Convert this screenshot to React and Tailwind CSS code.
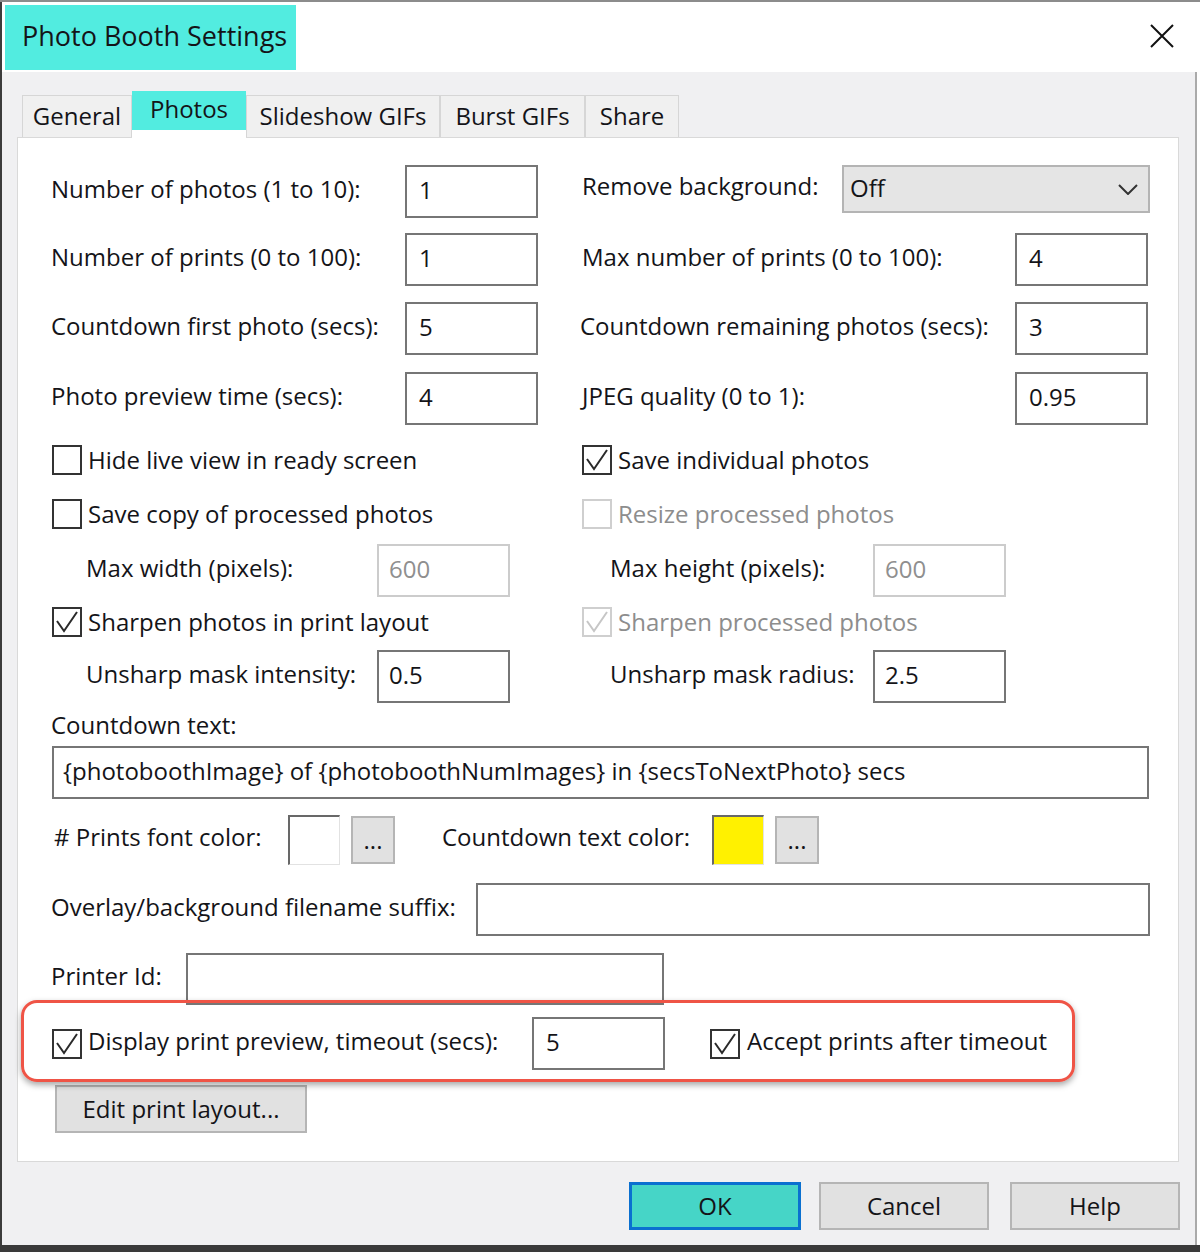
import React from 'react';

const CheckBox = ({ checked, disabled }) => (
  <div className={`w-[30px] h-[30px] shrink-0 bg-white border-2 ${disabled ? 'border-[#cfcfcf]' : 'border-[#333333]'}`}>
    {checked && (
      <svg viewBox="0 0 26 26" className="w-full h-full">
        <polyline points="3,12 10,22 23,3" fill="none" stroke={disabled ? '#c6c6c6' : '#2a2a2a'} strokeWidth="2" />
      </svg>
    )}
  </div>
);

const TextBox = ({ value, w, disabled, pad = 'pl-[12px]' }) => (
  <div className={`${w} h-full shrink-0 flex items-center ${pad} pb-[4px] bg-white border-2 ${disabled ? 'border-[#cccccc] text-[#8f8f8f]' : 'border-[#767676]'}`}>
    {value}
  </div>
);

const Button = ({ children, w, h = 'h-[48px]' }) => (
  <div className={`${w} ${h} shrink-0 flex items-center justify-center bg-[#e1e1e1] border-2 border-[#b5b5b5]`}>
    {children}
  </div>
);

const Swatch = ({ color }) => (
  <div className={`w-[52px] h-[50px] shrink-0 border-t-2 border-l-2 border-r border-b border-t-[#686868] border-l-[#686868] border-r-[#e2e2e2] border-b-[#e2e2e2] ${color}`} />
);

const Label = ({ w, className = '', children }) => (
  <span className={`${w} shrink-0 pb-[6px] ${className}`}>{children}</span>
);

const tabs = [
  { label: 'General', w: 'w-[110px]' },
  { label: 'Photos', w: 'w-[114px]', active: true },
  { label: 'Slideshow GIFs', w: 'w-[194px]' },
  { label: 'Burst GIFs', w: 'w-[145px]' },
  { label: 'Share', w: 'w-[94px]' },
];

export default function App() {
  return (
    <div className="w-[1200px] h-[1252px] bg-white font-['Open_Sans',sans-serif] text-[24px] text-[#141418] flex flex-col overflow-hidden">
      <div className="h-[2px] shrink-0 bg-[#8c8c8c]" />
      <div className="flex flex-1">
        <div className="w-[2px] bg-[#3c3c3c]" />
        <div className="w-[1195px] flex flex-col">
          {/* title bar */}
          <div className="h-[70px] shrink-0 flex items-start bg-white">
            <div className="mt-[3px] ml-[3px] w-[291px] h-[65px] bg-[#52ece0] flex items-center pl-[17px] pb-[2px] text-[27px]">
              Photo Booth Settings
            </div>
            <svg viewBox="0 0 24 24" className="ml-auto mt-[22px] mr-[23px] w-[24px] h-[24px]">
              <path d="M1 1 L23 23 M23 1 L1 23" stroke="#111" strokeWidth="2" fill="none" />
            </svg>
          </div>

          {/* body */}
          <div className="flex-1 bg-[#f0f0f2] border-r-2 border-[#aaaaaa] flex flex-col">
            <div className="mt-[19px] -mb-px ml-[20px] h-[47px] flex items-end relative z-10">
              {tabs.map((t) =>
                t.active ? (
                  <div key={t.label} className={`${t.w} h-[47px] flex flex-col`}>
                    <div className="h-[39px] bg-[#52ece0] flex items-center justify-center pb-[3px]">{t.label}</div>
                    <div className="h-[8px] bg-white" />
                  </div>
                ) : (
                  <div key={t.label} className={`${t.w} h-[42px] mb-px flex items-center justify-center pb-[2px] bg-[#f0f0f0] border-t border-l border-r border-[#d6d6d6]`}>
                    {t.label}
                  </div>
                )
              )}
            </div>

            {/* tab panel */}
            <div className="ml-[15px] w-[1162px] bg-white border border-[#d9d9d9] pl-[33px] pt-[27px] pb-[28px] flex flex-col">
              <div className="flex h-[53px]">
                <div className="w-[531px] flex items-center h-full">
                  <Label w="w-[354px]">Number of photos (1 to 10):</Label>
                  <TextBox value="1" w="w-[133px]" />
                </div>
                <div className="flex items-center h-[48px]">
                  <Label w="w-[260px]">Remove background:</Label>
                  <div className="w-[308px] h-full flex items-center justify-between pl-[6px] pr-[10px] pb-[3px] bg-[#e5e5e5] border-2 border-[#b4b4b4]">
                    <span>Off</span>
                    <svg viewBox="0 0 20 11" className="w-[20px] h-[11px] mt-[3px]">
                      <polyline points="1,1 10,10 19,1" fill="none" stroke="#333" strokeWidth="2" />
                    </svg>
                  </div>
                </div>
              </div>

              <div className="flex h-[53px] mt-[15px]">
                <div className="w-[531px] flex items-center h-full">
                  <Label w="w-[354px]">Number of prints (0 to 100):</Label>
                  <TextBox value="1" w="w-[133px]" />
                </div>
                <div className="flex items-center h-full">
                  <Label w="w-[433px]">Max number of prints (0 to 100):</Label>
                  <TextBox value="4" w="w-[133px]" />
                </div>
              </div>

              <div className="flex h-[53px] mt-[16px]">
                <div className="w-[531px] flex items-center h-full">
                  <Label w="w-[354px]">Countdown first photo (secs):</Label>
                  <TextBox value="5" w="w-[133px]" />
                </div>
                <div className="flex items-center h-full">
                  <Label w="w-[433px]" className="-ml-[2px] mr-[2px]">Countdown remaining photos (secs):</Label>
                  <TextBox value="3" w="w-[133px]" />
                </div>
              </div>

              <div className="flex h-[53px] mt-[17px]">
                <div className="w-[531px] flex items-center h-full">
                  <Label w="w-[354px]">Photo preview time (secs):</Label>
                  <TextBox value="4" w="w-[133px]" />
                </div>
                <div className="flex items-center h-full">
                  <Label w="w-[433px]">JPEG quality (0 to 1):</Label>
                  <TextBox value="0.95" w="w-[133px]" />
                </div>
              </div>

              <div className="flex h-[30px] mt-[20px]">
                <div className="w-[531px] flex items-center pl-[1px] gap-[6px]">
                  <CheckBox />
                  <span>Hide live view in ready screen</span>
                </div>
                <div className="flex items-center gap-[6px]">
                  <CheckBox checked />
                  <span>Save individual photos</span>
                </div>
              </div>

              <div className="flex h-[30px] mt-[24px]">
                <div className="w-[531px] flex items-center pl-[1px] gap-[6px]">
                  <CheckBox />
                  <span>Save copy of processed photos</span>
                </div>
                <div className="flex items-center gap-[6px] text-[#8d8d8d]">
                  <CheckBox disabled />
                  <span>Resize processed photos</span>
                </div>
              </div>

              <div className="flex h-[53px] mt-[15px]">
                <div className="w-[531px] flex items-center h-full pl-[35px]">
                  <Label w="w-[291px]">Max width (pixels):</Label>
                  <TextBox value="600" w="w-[133px]" disabled pad="pl-[10px]" />
                </div>
                <div className="flex items-center h-full pl-[28px]">
                  <Label w="w-[263px]">Max height (pixels):</Label>
                  <TextBox value="600" w="w-[133px]" disabled pad="pl-[10px]" />
                </div>
              </div>

              <div className="flex h-[30px] mt-[10px]">
                <div className="w-[531px] flex items-center pl-[1px] gap-[6px]">
                  <CheckBox checked />
                  <span>Sharpen photos in print layout</span>
                </div>
                <div className="flex items-center gap-[6px] text-[#8d8d8d]">
                  <CheckBox checked disabled />
                  <span>Sharpen processed photos</span>
                </div>
              </div>

              <div className="flex h-[53px] mt-[13px]">
                <div className="w-[531px] flex items-center h-full pl-[35px]">
                  <Label w="w-[291px]">Unsharp mask intensity:</Label>
                  <TextBox value="0.5" w="w-[133px]" pad="pl-[10px]" />
                </div>
                <div className="flex items-center h-full pl-[28px]">
                  <Label w="w-[263px]">Unsharp mask radius:</Label>
                  <TextBox value="2.5" w="w-[133px]" pad="pl-[10px]" />
                </div>
              </div>

              <div className="h-[30px] mt-[9px] flex items-center pb-[4px]">Countdown text:</div>

              <div className="h-[53px] mt-[4px] ml-[1px] flex">
                <TextBox value="{photoboothImage} of {photoboothNumImages} in {secsToNextPhoto} secs" w="w-[1097px]" pad="pl-[9px]" />
              </div>

              <div className="h-[50px] mt-[16px] flex items-center pl-[3px]">
                <Label w="w-[234px]">&#35; Prints font color:</Label>
                <Swatch color="bg-white" />
                <div className="ml-[11px]">
                  <Button w="w-[44px]">...</Button>
                </div>
                <Label w="w-[270px]" className="ml-[47px]">Countdown text color:</Label>
                <Swatch color="bg-[#fff100]" />
                <div className="ml-[11px]">
                  <Button w="w-[44px]">...</Button>
                </div>
              </div>

              <div className="h-[53px] mt-[18px] flex items-center">
                <Label w="w-[425px]">Overlay/background filename suffix:</Label>
                <TextBox value="" w="w-[674px]" />
              </div>

              <div className="h-[52px] mt-[17px] flex items-center">
                <Label w="w-[135px]">Printer Id:</Label>
                <TextBox value="" w="w-[478px]" />
              </div>

              <div className="relative h-[53px] mt-[12px] flex items-center pl-[1px]">
                <CheckBox checked />
                <Label w="w-[444px]" className="ml-[6px]">Display print preview, timeout (secs):</Label>
                <TextBox value="5" w="w-[133px]" />
                <div className="ml-[45px]">
                  <CheckBox checked />
                </div>
                <Label w="w-auto" className="ml-[7px]">Accept prints after timeout</Label>
                <div className="absolute left-[-30px] top-[-17px] w-[1054px] h-[82px] rounded-[16px] border-[3px] border-[#ef5446] shadow-[0_3px_6px_rgba(0,0,0,0.35)] pointer-events-none" />
              </div>

              <div className="mt-[15px] ml-[4px] flex">
                <Button w="w-[252px]">Edit print layout...</Button>
              </div>
            </div>

            {/* dialog buttons */}
            <div className="mt-[20px] flex justify-end pr-[15px]">
              <div className="w-[172px] h-[48px] flex items-center justify-center bg-[#46d5c7] border-[3px] border-[#0a70d0]">OK</div>
              <div className="ml-[18px]">
                <Button w="w-[170px]">Cancel</Button>
              </div>
              <div className="ml-[21px]">
                <Button w="w-[170px]">Help</Button>
              </div>
            </div>
          </div>
        </div>
        <div className="w-[3px] bg-white" />
      </div>
      <div className="h-[7px] shrink-0 bg-[#3a3a3a]" />
    </div>
  );
}
